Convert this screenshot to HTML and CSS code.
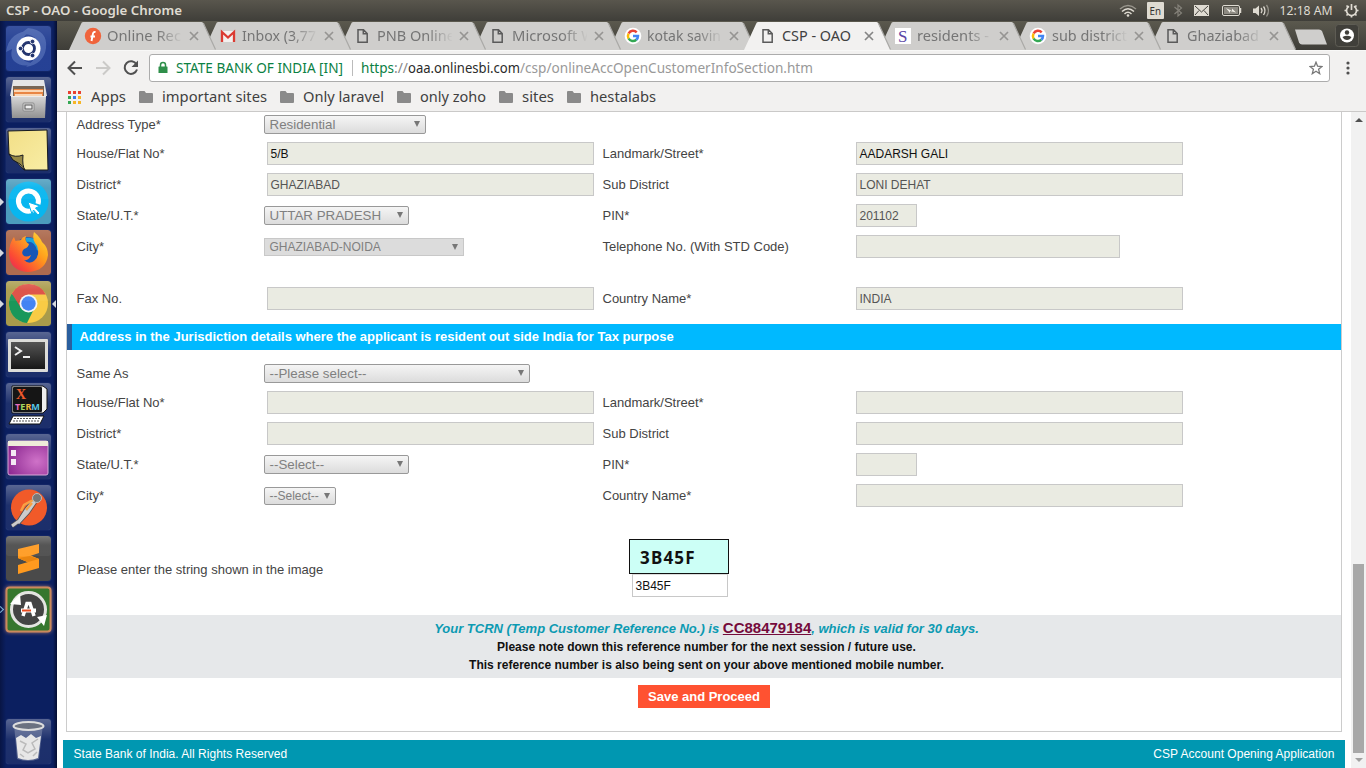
FILE: index.html
```html
<!DOCTYPE html>
<html lang="en">
<head>
<meta charset="utf-8">
<title>CSP - OAO</title>
<link rel="stylesheet" href="styles.css">
</head>
<body>
<svg class="defs" width="0" height="0">
  <defs>
    <symbol id="tab" viewBox="0 0 148 29"><path d="M0 29L12 3Q12.600 1 14 1H132.500Q134 1 134.600 3L146.500 29Z" fill="currentColor"/><path d="M134.300 2L146.500 28.500" fill="none" stroke="#aaa9a6" stroke-width="1.200"/></symbol>
    <symbol id="close" viewBox="0 0 10 10"><path d="M1 1L9 9M9 1L1 9" stroke="currentColor" stroke-width="1.700"/></symbol>
    <symbol id="doc" viewBox="0 0 18 18"><path d="M4 2.800H9.500L13.200 6.500V15.200H4ZM9.300 3V6.800H13" fill="none" stroke="#5a5a5a" stroke-width="1.500"/></symbol>
    <symbol id="google" viewBox="0 0 18 18"><circle cx="9" cy="9" r="8.300" fill="#fff"/><g fill="none" stroke-width="2.500"><path d="M4.600 6.500A5 5 0 0 1 12.700 5.400" stroke="#ea4335"/><path d="M4.600 6.500A5 5 0 0 0 4.600 11.500" stroke="#fbbc05"/><path d="M4.600 11.500A5 5 0 0 0 12.300 12.800" stroke="#34a853"/><path d="M9 9H14A5 5 0 0 1 12.300 12.800" stroke="#4285f4"/></g></symbol>
    <symbol id="folder" viewBox="0 0 14 12"><path d="M1 0H5.500L7 2H13Q14 2 14 3V11Q14 12 13 12H1Q0 12 0 11V1Q0 0 1 0Z" fill="#8a8a8a"/></symbol>
    <linearGradient id="gloss" x2="0" y2="1"><stop offset="0" stop-color="#fff" stop-opacity=".32"/><stop offset=".45" stop-color="#fff" stop-opacity=".08"/><stop offset="1" stop-color="#fff" stop-opacity=".07"/></linearGradient>
    <linearGradient id="steel" x2="0" y2="1"><stop offset="0" stop-color="#d8d8d8"/><stop offset="1" stop-color="#919191"/></linearGradient>
    <linearGradient id="note" x2="1" y2="1"><stop offset="0" stop-color="#f2df87"/><stop offset="1" stop-color="#f8eda5"/></linearGradient>
    <linearGradient id="fox" x1="1" y1="0" x2="0" y2="1"><stop offset="0" stop-color="#ffe22e"/><stop offset=".4" stop-color="#ff9b1c"/><stop offset=".75" stop-color="#fb4a34"/><stop offset="1" stop-color="#e21e63"/></linearGradient>
    <radialGradient id="purple" cx=".72" cy=".6" r=".8"><stop offset="0" stop-color="#cf72c8"/><stop offset="1" stop-color="#8b2790"/></radialGradient>
    <linearGradient id="dark" x2="0" y2="1"><stop offset="0" stop-color="#555"/><stop offset="1" stop-color="#171717"/></linearGradient>
  </defs>
</svg>

<header class="panel">
  <svg class="panel-title" width="178" height="21"><text x="0" y="15" textLength="176" lengthAdjust="spacingAndGlyphs">CSP - OAO - Google Chrome</text></svg>
  <svg class="indicators" width="250" height="21" viewBox="0 0 250 21">
    <g fill="none" stroke="#dfdbd2" stroke-width="1.500"><path d="M4 9Q12 2 20 9" opacity=".5"/><path d="M6 11.500Q12 6 18 11.500M8.500 14Q12 10.500 15.500 14"/></g><circle cx="12" cy="15.500" r="1.300" fill="#dfdbd2"/>
    <rect x="31" y="2" width="17" height="17" rx="1" fill="#dfdbd2"/><text class="lang" x="33.500" y="14.500" textLength="11.500" lengthAdjust="spacingAndGlyphs">En</text>
    <path d="M58.500 7L65.500 13L62 16V5L65.500 8L58.500 14" fill="none" stroke="#85827a" stroke-width="1.200"/>
    <rect x="78" y="5" width="15" height="11" fill="#dfdbd2"/><path d="M79 6L85.500 12L92 6M79 15L83 10.500M92 15L88 10.500" fill="none" stroke="#45433e"/>
    <rect x="106.500" y="5.500" width="17" height="10" rx="1.500" fill="none" stroke="#dfdbd2"/><rect x="108" y="7" width="14" height="7" fill="#8d8a82"/><path d="M124.500 8V13" stroke="#dfdbd2" stroke-width="1.500"/><path d="M110 8L116 11V8.500L120 12.500L114 11V13Z" fill="#f2efe8"/>
    <path d="M137 8.500H139.500L143 5.500V16L139.500 13H137Z" fill="#dfdbd2"/><g fill="none" stroke="#dfdbd2" stroke-width="1.300"><path d="M145 8Q147 10.500 145 13M147.500 6.500Q150.500 10.500 147.500 15"/><path d="M150.500 5Q154.500 10.500 150.500 16.500" opacity=".5"/></g>
    <text x="163.500" y="15" textLength="53" lengthAdjust="spacingAndGlyphs">12:18 AM</text>
    <g transform="translate(-6 0)" fill="none" stroke="#dfdbd2" stroke-width="1.700"><path d="M239 6.200A5 5 0 1 0 244 6.200"/><path d="M241.500 4V10"/><path d="M234.500 10.500H236.500M246.500 10.500H248.500M236.500 5.500L238 7M246.500 5.500L245 7M236.500 15.500L238 14M246.500 15.500L245 14M241.500 15.500V17.500"/></g>
  </svg>
</header>

<div class="desktop">
<aside class="launcher">
  <svg class="tile" viewBox="0 0 45 45"><rect width="45" height="45" rx="3" fill="#203c92"/><path d="M0 26Q3 5 25 5Q15 10 14 22Q13 38 30 37Q17 43 8 35Q4 31 6 23M22 2Q42 4 40 22Q38 38 20 41Q34 30 33 20Q31 7 14 8Z" fill="#86a1dc" opacity=".35"/><circle cx="22.500" cy="22.500" r="12" fill="#fff"/><circle cx="22.500" cy="22.500" r="6" fill="none" stroke="#1d2f6a" stroke-width="2.800"/><g fill="#1d2f6a" stroke="#fff" stroke-width=".8"><circle cx="14.500" cy="22.500" r="2.300"/><circle cx="26.500" cy="15.500" r="2.300"/><circle cx="26.500" cy="29.500" r="2.300"/></g><rect width="45" height="45" rx="3" fill="url(#gloss)" opacity=".35"/></svg>
  <svg class="tile" viewBox="0 0 45 45"><rect width="45" height="45" rx="3" fill="url(#gloss)"/><path d="M7 3H38L41 19H4Z" fill="#e5e5e5"/><path d="M7 9H38V20H7Z" fill="#765"/><path d="M8 12H37V20H8Z" fill="#e88645"/><path d="M8 14H37M9 18H36" stroke="#fff2dc" stroke-width="1.500"/><path d="M5 19H40L39 41H6Z" fill="url(#steel)"/><path d="M5 19.500H40" stroke="#ececec"/><rect x="17" y="26" width="11" height="8" rx="1" fill="#ddd" stroke="#888"/><rect x="19" y="28" width="7" height="4" fill="#eee" stroke="#555"/></svg>
  <svg class="tile" viewBox="0 0 45 45"><rect width="45" height="45" rx="3" fill="url(#gloss)"/><path d="M2 3L41 2L42 42H18L3 26Z" fill="url(#note)" stroke="#171a20"/><path d="M3 26Q9 30 17 27Q16 38 19 42Q15 35 7 32Z" fill="#968946" stroke="#171a20"/></svg>
  <svg class="tile" viewBox="0 0 45 45"><rect width="45" height="45" rx="3" fill="#4b9cbd"/><circle cx="22.500" cy="22.500" r="20" fill="#08b6ef"/><path d="M27 31A10 10 0 1 1 32 25" fill="none" stroke="#fff" stroke-width="5"/><path d="M22 23L34 27L29.500 29L34 34L32 36L27.500 31L26 35Z" fill="#fff" stroke="#08b6ef"/><rect width="45" height="20" rx="3" fill="url(#gloss)" opacity=".5"/></svg>
  <svg class="tile" viewBox="0 0 45 45"><rect width="45" height="45" rx="3" fill="#ad6b4f"/><circle cx="22" cy="20" r="13" fill="#1756b5"/><path d="M20 10Q30 8 33 20" fill="none" stroke="#16a3dc" stroke-width="4"/><path d="M28 2Q34 7 36 12Q42 17 42 25Q40 41 22 42Q4 41 3 24Q3 13 8 7L9.500 11L15 10Q16 7 20 6Q18 11 23 14Q22 18 18 19Q15 22 17 25Q20 28 25 25Q23 31 18 30Q23 35 28 31Q33 27 32 20Q32 16 29 13Q26 8 28 2Z" fill="url(#fox)"/><rect width="45" height="20" rx="3" fill="url(#gloss)" opacity=".3"/></svg>
  <svg class="tile" viewBox="0 0 45 45"><rect width="45" height="45" rx="3" fill="#a99b4b"/><circle cx="22.500" cy="22.500" r="19.500" fill="#f8cb45"/><path d="M22.500 22.500L5.600 12.800A19.500 19.500 0 0 0 21 42L29 26Z" fill="#19975a"/><path d="M22.500 13.500H39.800A19.500 19.500 0 0 0 5.800 12.500L15 27L22.500 22.500Z" fill="#dc4d42"/><circle cx="22.500" cy="22.500" r="9" fill="#f5f5f5"/><circle cx="22.500" cy="22.500" r="7.200" fill="#4384f3"/><rect width="45" height="20" rx="3" fill="url(#gloss)" opacity=".6"/></svg>
  <svg class="tile" viewBox="0 0 45 45"><rect width="45" height="45" rx="3" fill="url(#gloss)"/><rect x="2" y="7" width="40" height="33" rx="1" fill="#dcdcd9"/><rect x="5" y="10" width="34" height="27" fill="url(#dark)"/><path d="M9 15L15 19L9 23M17 25H24" fill="none" stroke="#eee" stroke-width="2"/></svg>
  <svg class="tile" viewBox="0 0 45 45"><rect width="45" height="45" rx="3" fill="url(#gloss)"/><path d="M6 3H37L41 6V26L37 30H6Z" fill="#eee" stroke="#111"/><rect x="7" y="4" width="29" height="25" rx="1" fill="#151515"/><text class="xt-x" x="10" y="16">X</text><text class="xt" x="9" y="26.500" textLength="25" lengthAdjust="spacingAndGlyphs"><tspan fill="#e96cbf">T</tspan><tspan fill="#9fdc63">E</tspan><tspan fill="#efb93b">R</tspan><tspan fill="#55c6e6">M</tspan></text><path d="M7 33H38L34 41H3Z" fill="#fff" stroke="#111"/><path d="M8 35.500H35M7 38H34" stroke="#555" stroke-dasharray="2 1"/></svg>
  <svg class="tile" viewBox="0 0 45 45"><rect width="45" height="45" rx="3" fill="url(#gloss)"/><rect x="2" y="7" width="40" height="34" rx="2" fill="url(#purple)" stroke="#d9a8d8"/><path d="M2 7H42V12H2Z" fill="#eeecd9"/><path d="M5 16H10V22H5ZM5 25H10V31H5Z" fill="#f4e9f3"/></svg>
  <svg class="tile" viewBox="0 0 45 45"><rect width="45" height="45" rx="3" fill="url(#gloss)"/><circle cx="23" cy="22.500" r="18" fill="#f15a29"/><path d="M28 15L20 25L13 36L6 41M29 17L22 27L12 38" fill="none" stroke="#555" stroke-width="4.500"/><path d="M28 15L20 25L13 36L6 41M29 17L22 27L12 38" fill="none" stroke="#ccc" stroke-width="2.800"/><path d="M27 15L18 20L15 26M26 18L20 25" fill="none" stroke="#f8a044" stroke-width="2.500"/><circle cx="31" cy="13" r="4.500" fill="#777" stroke="#bbb"/></svg>
  <svg class="tile" viewBox="0 0 45 45"><rect width="45" height="45" rx="3" fill="#4a4a4a"/><path d="M12 13L33 8V17L24 20L33 23V32L12 38V29L22 26L12 22Z" fill="#ff9a1f"/><path d="M12 22L12 14L33 23V31Z" fill="#ff9a1f"/><path d="M12 22L24 20L33 23L22 26Z" fill="#e98510"/><rect width="45" height="20" rx="3" fill="url(#gloss)" opacity=".8"/></svg>
  <svg class="tile updater" viewBox="0 0 45 45"><rect x=".5" y=".5" width="44" height="44" rx="3" fill="#36772e" stroke="#cb895c" stroke-width="2"/><circle cx="22.500" cy="22.500" r="17" fill="#444" stroke="#e4e4e1" stroke-width="3"/><path d="M4 17L14 7L15 18ZM31 30L41 28L38 39Z" fill="#fff"/><path d="M17 29L21 16.500H24L28 29" fill="none" stroke="#fff" stroke-width="3.500"/><path d="M15 23.500H30" stroke="#fff" stroke-width="4"/><path d="M16 23.500H25" stroke="#e84b20" stroke-width="2"/></svg>
  <svg class="tile trash" viewBox="0 0 45 45"><rect width="45" height="45" rx="3" fill="url(#gloss)"/><path d="M8 5L11 40Q22 44 33 40L37 5" fill="#98a2bb" opacity=".45"/><path d="M10 19L15 16L20 19L25 15L30 19L35 17L32 39Q22 43 12 39Z" fill="#e7e7e7"/><path d="M14 22L20 25L17 31L22 34L29 30L26 24L32 20M14 35L18 38M27 37L31 33" fill="none" stroke="#bbb" stroke-width="1.500"/><ellipse cx="22.500" cy="7" rx="15" ry="4" fill="#6b7180" stroke="#ddd" stroke-width="2"/></svg>
  <i class="pip p1"></i><i class="pip p2"></i><i class="pip p3"></i><i class="pip hollow"></i><i class="pip active"></i>
</aside>

<main class="browser">
  <nav class="tabs">
    <div class="tab t1"><svg class="tab-shape"><use href="#tab"/></svg><svg class="fav" viewBox="0 0 18 18"><circle cx="9" cy="9" r="8.200" fill="#f0643c"/><path d="M11.500 5Q9 4.500 8.800 7.500L7.500 14M6.500 9.500H11" fill="none" stroke="#fff" stroke-width="1.900"/></svg><svg class="name fade"><text y="20" textLength="74" lengthAdjust="spacingAndGlyphs">Online Rec</text></svg><svg class="x"><use href="#close"/></svg></div>
    <div class="tab t2"><svg class="tab-shape"><use href="#tab"/></svg><svg class="fav" viewBox="0 0 18 18"><path d="M2 4H16V15H2Z" fill="#f3f0ef"/><path d="M3 15V5L9 10.500L15 5V15" fill="none" stroke="#db3b32" stroke-width="2.300"/></svg><svg class="name fade"><text y="20" textLength="74" lengthAdjust="spacingAndGlyphs">Inbox (3,77</text></svg><svg class="x"><use href="#close"/></svg></div>
    <div class="tab t3"><svg class="tab-shape"><use href="#tab"/></svg><svg class="fav"><use href="#doc"/></svg><svg class="name fade"><text y="20" textLength="78" lengthAdjust="spacingAndGlyphs">PNB Online</text></svg><svg class="x"><use href="#close"/></svg></div>
    <div class="tab t4"><svg class="tab-shape"><use href="#tab"/></svg><svg class="fav"><use href="#doc"/></svg><svg class="name fade"><text y="20" textLength="83" lengthAdjust="spacingAndGlyphs">Microsoft W</text></svg><svg class="x"><use href="#close"/></svg></div>
    <div class="tab t5"><svg class="tab-shape"><use href="#tab"/></svg><svg class="fav"><use href="#google"/></svg><svg class="name fade"><text y="20" textLength="74" lengthAdjust="spacingAndGlyphs">kotak savin</text></svg><svg class="x"><use href="#close"/></svg></div>
    <div class="tab current"><svg class="tab-shape"><use href="#tab"/></svg><svg class="fav"><use href="#doc"/></svg><svg class="name"><text y="20" textLength="69" lengthAdjust="spacingAndGlyphs">CSP - OAO</text></svg><svg class="x"><use href="#close"/></svg></div>
    <div class="tab t7"><svg class="tab-shape"><use href="#tab"/></svg><svg class="fav" viewBox="0 0 18 18"><rect x="1" y="1" width="16" height="16" fill="#fff"/><text class="s-mark" x="4" y="15">S</text></svg><svg class="name fade"><text y="20" textLength="72" lengthAdjust="spacingAndGlyphs">residents -</text></svg><svg class="x"><use href="#close"/></svg></div>
    <div class="tab t8"><svg class="tab-shape"><use href="#tab"/></svg><svg class="fav"><use href="#google"/></svg><svg class="name fade"><text y="20" textLength="75" lengthAdjust="spacingAndGlyphs">sub district</text></svg><svg class="x"><use href="#close"/></svg></div>
    <div class="tab t9"><svg class="tab-shape"><use href="#tab"/></svg><svg class="fav"><use href="#doc"/></svg><svg class="name fade"><text y="20" textLength="72" lengthAdjust="spacingAndGlyphs">Ghaziabad</text></svg><svg class="x"><use href="#close"/></svg></div>
    <svg class="newtab" viewBox="0 0 34 16"><path d="M1 .5H25Q27 .5 28 2L33 15.500H8Q6 15.500 5 13.500Z" fill="#cfcecc"/></svg>
    <svg class="avatar" viewBox="0 0 24 23"><rect x=".5" y=".5" width="23" height="22" rx="3" fill="#403f3a" stroke="#5e5c54"/><circle cx="12" cy="11.500" r="7" fill="#fff"/><circle cx="12" cy="8.500" r="2.200" fill="#403f3a"/><path d="M7.500 13Q12 10.500 16.500 13Q15 16 12 16Q9 16 7.500 13Z" fill="#403f3a"/></svg>
  </nav>
  <div class="toolbar">
    <svg class="navs" width="92" height="28" viewBox="0 0 92 28"><g fill="none" stroke-width="2"><path d="M25 14H12M18 7.500L11.500 14L18 20.500" stroke="#505050"/><path d="M39 14H52M46 7.500L52.500 14L46 20.500" stroke="#cbcac8"/><path d="M79.500 10.500A6.300 6.300 0 1 0 80 15.500" stroke="#505050"/></g><path d="M81 6.500V13H74.500Z" fill="#505050"/></svg>
    <div class="omnibox">
      <svg width="10" height="14" viewBox="0 0 10 14"><path d="M1 5.500H9Q9.500 5.500 9.500 6V12H.5V6Q.5 5.500 1 5.500Z" fill="#2f8f4a"/><path d="M2.500 6V4A2.500 2.500 0 0 1 7.500 4V6" fill="none" stroke="#2f8f4a" stroke-width="1.500"/></svg>
      <svg class="url" width="660" height="26"><g><text x="0" y="18" fill="#0b8043" textLength="167" lengthAdjust="spacingAndGlyphs">STATE BANK OF INDIA [IN]</text><path d="M176.500 5V21" stroke="#bbb"/><text x="185" y="18" fill="#0b8043" textLength="33" lengthAdjust="spacingAndGlyphs">https</text><text x="218" y="18" fill="#888" textLength="14" lengthAdjust="spacingAndGlyphs">://</text><text x="232" y="18" fill="#2b2b2b" textLength="112" lengthAdjust="spacingAndGlyphs">oaa.onlinesbi.com</text><text x="344" y="18" fill="#999" textLength="293" lengthAdjust="spacingAndGlyphs">/csp/onlineAccOpenCustomerInfoSection.htm</text></g></svg>
      <svg class="star" width="14" height="14" viewBox="0 0 14 14"><path d="M7 1.200L8.600 5.200L13 5.500L9.600 8.300L10.700 12.700L7 10.300L3.300 12.700L4.400 8.300L1 5.500L5.400 5.200Z" fill="none" stroke="#777" stroke-width="1.300"/></svg>
    </div>
    <svg class="menu" width="4" height="14" viewBox="0 0 4 14"><g fill="#505050"><circle cx="2" cy="2" r="1.600"/><circle cx="2" cy="7" r="1.600"/><circle cx="2" cy="12" r="1.600"/></g></svg>
  </div>
  <div class="bookmarks">
    <svg class="apps" width="13" height="13" viewBox="0 0 13 13"><path d="M0 0H3V3H0ZM5 0H8V3H5ZM10 0H13V3H10Z" fill="#e8402f"/><path d="M0 5H3V8H0ZM0 10H3V13H0Z" fill="#35a853"/><path d="M5 5H8V8H5Z" fill="#3b7be8"/><path d="M10 5H13V8H10ZM5 10H8V13H5ZM10 10H13V13H10Z" fill="#f6b526"/></svg>
    <svg class="bm" width="48" height="24"><text y="17" textLength="35" lengthAdjust="spacingAndGlyphs">Apps</text></svg>
    <svg width="14" height="12"><use href="#folder"/></svg><svg class="bm" width="118" height="24"><text y="17" textLength="105" lengthAdjust="spacingAndGlyphs">important sites</text></svg>
    <svg width="14" height="12"><use href="#folder"/></svg><svg class="bm" width="94" height="24"><text y="17" textLength="81" lengthAdjust="spacingAndGlyphs">Only laravel</text></svg>
    <svg width="14" height="12"><use href="#folder"/></svg><svg class="bm" width="79" height="24"><text y="17" textLength="66" lengthAdjust="spacingAndGlyphs">only zoho</text></svg>
    <svg width="14" height="12"><use href="#folder"/></svg><svg class="bm" width="45" height="24"><text y="17" textLength="32" lengthAdjust="spacingAndGlyphs">sites</text></svg>
    <svg width="14" height="12"><use href="#folder"/></svg><svg class="bm" width="80" height="24"><text y="17" textLength="66" lengthAdjust="spacingAndGlyphs">hestalabs</text></svg>
  </div>

  <div class="viewport">
    <div class="page">
      <form class="sheet">
        <div class="row short"><label>Address Type*</label><div class="select w162">Residential</div></div>
        <div class="row"><label>House/Flat No*</label><div class="field typed">5/B</div><label>Landmark/Street*</label><div class="field typed">AADARSH GALI</div></div>
        <div class="row"><label>District*</label><div class="field">GHAZIABAD</div><label>Sub District</label><div class="field">LONI DEHAT</div></div>
        <div class="row"><label>State/U.T.*</label><div class="select w145">UTTAR PRADESH</div><label>PIN*</label><div class="field pin">201102</div></div>
        <div class="row"><label>City*</label><div class="select small flat">GHAZIABAD-NOIDA</div><label>Telephone No. (With STD Code)</label><div class="field phone"></div></div>
        <div class="row fax"><label>Fax No.</label><div class="field"></div><label>Country Name*</label><div class="field">INDIA</div></div>
        <h2>Address in the Jurisdiction details where the applicant is resident out side India for Tax purpose</h2>
        <div class="row short"><label>Same As</label><div class="select w266">--Please select--</div></div>
        <div class="row"><label>House/Flat No*</label><div class="field"></div><label>Landmark/Street*</label><div class="field"></div></div>
        <div class="row"><label>District*</label><div class="field"></div><label>Sub District</label><div class="field"></div></div>
        <div class="row"><label>State/U.T.*</label><div class="select w145">--Select--</div><label>PIN*</label><div class="field pin"></div></div>
        <div class="row"><label>City*</label><div class="select small w72">--Select--</div><label>Country Name*</label><div class="field"></div></div>
        <div class="captcha"><label>Please enter the string shown in the image</label><div><div class="code">3B45F</div><div class="field typed answer">3B45F</div></div></div>
        <div class="notice"><p class="tcrn">Your TCRN (Temp Customer Reference No.) is <a>CC88479184</a>, which is valid for 30 days.</p><p>Please note down this reference number for the next session / future use.</p><p>This reference number is also being sent on your above mentioned mobile number.</p></div>
        <div class="actions"><button type="button">Save and Proceed</button></div>
      </form>
      <footer><span>State Bank of India. All Rights Reserved</span><span>CSP Account Opening Application</span></footer>
    </div>
    <div class="scrollbar"><i class="up"></i><i class="thumb"></i><i class="down"></i></div>
  </div>
</main>
</div>
</body>
</html>
```
FILE: styles.css
```css
* { box-sizing: border-box; }
body { margin: 0; width: 1366px; height: 768px; overflow: hidden; font: 13px "Liberation Sans", Arial, sans-serif; color: #444; background: #fff; }
svg { display: block; flex: none; }
svg text { font-family: "Noto Sans", sans-serif; }
.defs { position: absolute; }

.panel { height: 21px; display: flex; justify-content: space-between; padding-left: 6px; background: linear-gradient(#59564d, #3f3e39); }
.panel text { font-size: 13px; fill: #dfdbd2; }
.panel .panel-title text { font-weight: 600; }
.panel .lang { font-size: 11px; fill: #333; }

.desktop { display: flex; height: 747px; }
.launcher { position: relative; width: 57px; padding: 5px 0 4px 6px; display: flex; flex-direction: column; gap: 6px; background: linear-gradient(90deg, #081544, #0b1f60 6px, #0b1f60 53px, #040d30); }
.tile { width: 45px; height: 45px; border-radius: 3px; box-shadow: 0 0 1px #5a6ca0; }
.updater { overflow: visible; border-radius: 3px; box-shadow: 0 0 4px #d08c70; }
.trash { margin-top: auto; }
svg .xt-x { font: bold 14px "Liberation Serif", serif; fill: #ef5b2d; }
.xt { font-size: 8px; font-weight: bold; }
.pip { position: absolute; left: 0; border: 4px solid transparent; border-left-color: #d4d8df; border-right: 0; }
.p1 { top: 177px; } .p2 { top: 228px; } .p3 { top: 279px; }
.hollow { border: 0; width: 5px; height: 5px; left: -2px; top: 586px; border-top: 1px solid #7ab2d4; border-right: 1px solid #7ab2d4; transform: rotate(45deg); }
.pip.active { left: auto; right: 1px; top: 279px; border: 4px solid transparent; border-right-color: #d4d8df; border-left: 0; }

.browser { width: 1309px; display: flex; flex-direction: column; }
.tabs { height: 29px; display: flex; padding-left: 12px; background: linear-gradient(#5b594e, #3e3d38); }
.tab { position: relative; width: 148px; height: 29px; margin-right: -13px; padding-left: 15px; display: flex; align-items: center; color: #cfcecc; }
.tab-shape { position: absolute; left: 0; top: 0; width: 148px; height: 29px; }
.fav { position: relative; width: 18px; height: 18px; }
.name { position: relative; width: 75px; height: 29px; margin-left: 5px; }
.name text { font-size: 14.5px; fill: #757575; }
.fade { -webkit-mask: linear-gradient(90deg, #000 50px, transparent 76px); mask: linear-gradient(90deg, #000 50px, transparent 76px); }
.x { position: relative; width: 10px; height: 10px; margin-left: 7px; color: #969593; }
.t1 { z-index: 9; } .t2 { z-index: 8; } .t3 { z-index: 7; } .t4 { z-index: 6; } .t5 { z-index: 5; }
.t7 { z-index: 4; } .t8 { z-index: 3; } .t9 { z-index: 2; }
.current { z-index: 10; color: #f2f1f0; }
.current .name text { fill: #404040; }
.current .x { color: #858585; }
svg .s-mark { font: 17px "Liberation Serif", serif; fill: #5a45a5; }
.newtab { width: 34px; height: 16px; margin: 8px 0 0 10px; }
.avatar { width: 24px; height: 23px; margin: 3px 0 0 7px; }

.toolbar { height: 33px; display: flex; align-items: center; padding-top: 3px; background: #f2f1f0; box-shadow: inset 0 1px #f8f8f7; }
.omnibox { width: 1181px; height: 28px; border: 1px solid #acacac; border-radius: 3px; background: #fff; display: flex; align-items: center; padding-left: 8px; }
.url { margin-left: 8px; }
.url text { font-size: 14px; }
.star { margin-left: auto; margin-right: 6px; }
.menu { margin-left: 16px; }
.bookmarks { height: 29px; display: flex; align-items: center; padding-left: 11px; background: #f2f1f0; border-bottom: 1px solid #cac9c8; }
.bm { margin-left: 9px; }
.apps + .bm { margin-left: 10px; }
.bm text { font-size: 14.5px; fill: #404040; }

.viewport { display: flex; height: 656px; }
.page { width: 1294px; padding: 0 6px; }
.sheet { margin: 0 3px; height: 620px; border: solid #ccc; border-width: 0 1px 1px; }
.row { height: 31px; display: grid; grid-template-columns: 188px 338px 251px 1fr; align-items: center; padding-left: 9px; }
.row.short { height: 25px; margin-bottom: 1px; }
.row.fax { margin: 21px 0 10px; }
.row label { padding-left: .5px; }
.field { width: 327px; height: 23px; margin-left: 3px; padding: 0 2.5px; border: 1px solid #c8c8c8; background: #eaebe2; font-size: 12px; line-height: 22px; color: #555; white-space: nowrap; }
.typed { color: #111; }
.pin { width: 61px; }
.phone { width: 264px; }
.select { position: relative; height: 19px; padding-left: 4.5px; border: 1px solid #999; border-radius: 2px; background: linear-gradient(#f5f5f5, #dcdcdc); color: #808080; font-size: 13.333px; line-height: 18px; white-space: nowrap; }
.select::after { content: ""; position: absolute; right: 5px; top: 5px; border: 3px solid transparent; border-top: 6px solid #777; border-bottom: 0; }
.small { height: 18px; font-size: 12px; line-height: 16px; }
.flat { width: 200px; border-color: #c8c8c8; border-radius: 0; background: #dcdcdc; }
.w162 { width: 162px; } .w145 { width: 145px; } .w266 { width: 266px; } .w72 { width: 72px; }
h2 { margin: 0 0 11px; height: 26px; border-left: 5px solid #2a5f9e; padding-left: 7.5px; background: #00b9ff; color: #fff; font-size: 13px; line-height: 26px; }
.captcha { height: 104px; padding: 28px 0 0 11px; display: grid; grid-template-columns: 551px 100px; align-items: start; }
.captcha label { padding-top: 23px; margin-left: -.5px; }
.code { width: 100px; height: 35px; border: 1px solid #111; background: #ccfff6; color: #111; padding-left: 10px; font: bold 17px/35px "Noto Sans", sans-serif; letter-spacing: 1.2px; }
.answer { width: 96px; background: #fff; border-top-color: #ddd; }
.notice { height: 63px; padding-top: 5px; background: #e6e8ea; text-align: center; font-size: 12px; font-weight: bold; color: #111; }
.notice p { margin: 0 -5px 0 0; height: 18px; line-height: 19px; }
.notice .tcrn { height: 18px; line-height: 17px; margin-top: -1px; margin-bottom: 1px; font-size: 13px; font-style: italic; color: #0c9ab2; }
.notice a { font-size: 15px; font-style: normal; color: #750b3b; text-decoration: underline; }
.actions { padding: 7px 0 0 571px; }
button { display: block; width: 132px; height: 23px; padding: 0; border: 0; background: #ff5231; color: #fff; font: bold 13px "Liberation Sans", sans-serif; }
footer { height: 28px; margin-top: 8px; padding: 0 10.5px; display: flex; justify-content: space-between; background: #0097b1; color: #fff; font-size: 12px; letter-spacing: .02px; line-height: 28px; }
.scrollbar { width: 15px; background: #f1f1f1; display: flex; flex-direction: column; align-items: center; padding: 6px 0; }
.up { border: 4px solid transparent; border-top: 0; border-bottom-color: #505050; }
.thumb { width: 11px; height: 189px; margin-top: 442px; background: #a8a8a8; }
.down { margin-top: 5px; border: 4px solid transparent; border-bottom: 0; border-top-color: #a0a0a0; }
```
